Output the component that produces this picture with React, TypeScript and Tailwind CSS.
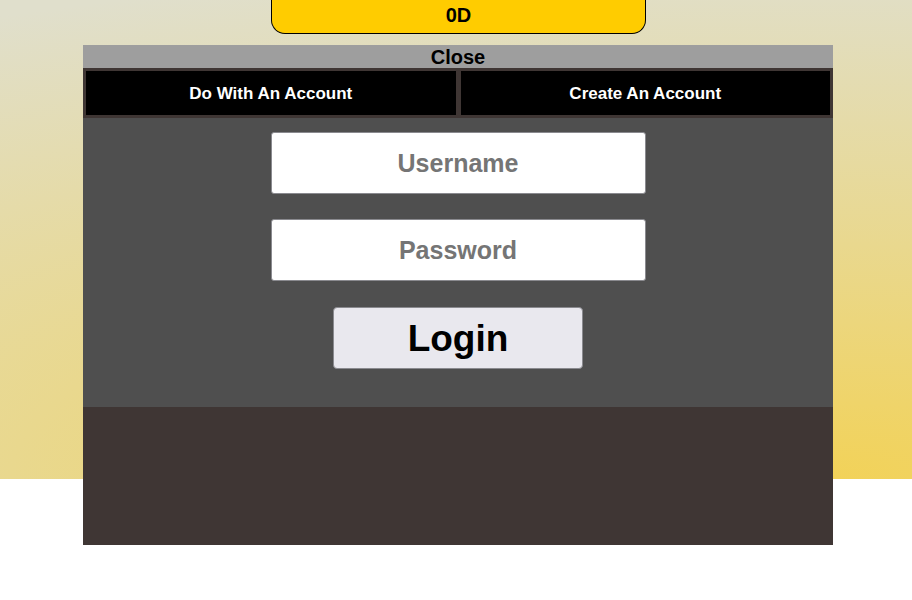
import React from "react";

export default function App() {
  return (
    <div className="relative w-[912px] h-[600px] bg-white font-['Liberation_Sans',Arial,sans-serif] overflow-hidden">
      <div className="h-[479px] bg-[radial-gradient(ellipse_1800px_520px_at_90%_100%,#f2d258_0%,#e9d88e_45%,#e0dfcc_100%)] flex">
        <div className="ml-[271px] w-[375px] h-[34px] bg-[#ffcc00] border border-t-0 border-black rounded-b-[14px] flex items-center justify-center pb-[3px]">
          <span className="text-[20px] font-bold text-black leading-none">0D</span>
        </div>
      </div>

      <div className="absolute left-[83px] top-[45px] w-[750px] h-[500px] flex flex-col bg-[#3f3634]">
        <div className="h-[23px] bg-[#9e9e9e] flex items-center justify-center">
          <span className="text-[20px] font-bold text-black leading-none">Close</span>
        </div>
        <div className="h-[50px] bg-[#3f3634] flex gap-[5px] p-[3px]">
          <div className="flex-1 bg-black flex items-center justify-center pt-[1px]">
            <span className="text-[17px] font-bold text-white">Do With An Account</span>
          </div>
          <div className="flex-1 bg-black flex items-center justify-center pt-[1px]">
            <span className="text-[17px] font-bold text-white">Create An Account</span>
          </div>
        </div>
        <div className="h-[289px] bg-[#4f4f4f] flex flex-col items-center pt-[14px]">
          <input
            placeholder="Username"
            className="w-[375px] h-[62px] bg-white border border-[#8a8a8f] rounded-[3px] text-center text-[25px] font-bold text-black placeholder:text-[#757575] outline-none"
          />
          <input
            type="password"
            placeholder="Password"
            className="mt-[25px] w-[375px] h-[62px] bg-white border border-[#8a8a8f] rounded-[3px] text-center text-[25px] font-bold text-black placeholder:text-[#757575] outline-none"
          />
          <button className="mt-[26px] w-[250px] h-[62px] bg-[#e9e8ee] border border-[#8a8a8f] rounded-[4px] flex items-center justify-center">
            <span className="text-[37px] font-bold text-black leading-none">Login</span>
          </button>
        </div>
        <div className="flex-1 bg-[#3f3634]" />
      </div>
    </div>
  );
}
